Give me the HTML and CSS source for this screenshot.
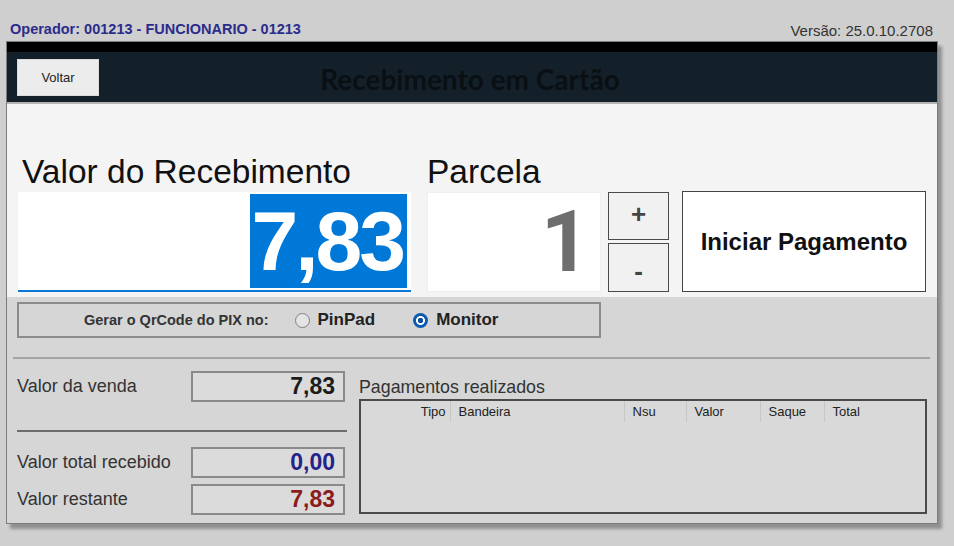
FILE: index.html
```html
<!DOCTYPE html>
<html lang="pt-BR">
  <head>
    <meta charset="UTF-8" />
    <title>Recebimento em Cartão</title>
    <link rel="stylesheet" href="styles.css">
  </head>
  <body>
  <div class="topbar">
    <span class="operador">Operador: 001213 - FUNCIONARIO - 01213</span>
    <span class="versao">Versão: 25.0.10.2708</span>
  </div>

  <div class="panel">
    <div class="header">
      <div><button class="voltar-btn">Voltar</button></div>
      <h1>Recebimento em Cartão</h1>
      <div></div>
    </div>

    <div class="top-section">
      <div class="field valor-field">
        <label>Valor do Recebimento</label>
        <div class="valor-box"><span class="selected">7,83</span></div>
      </div>

      <div class="field parcela-field">
        <label>Parcela</label>
        <div class="parcela-box">1</div>
      </div>

      <div class="stepper">
        <button class="step-btn plus">+</button>
        <button class="step-btn minus">-</button>
      </div>

      <button class="iniciar-btn">Iniciar Pagamento</button>
    </div>

    <div class="bottom-section">
      <div class="pix-box">
        <span class="pix-label">Gerar o QrCode do PIX no:</span>
        <span class="radio"></span>
        <span class="radio-text">PinPad</span>
        <span class="radio checked"></span>
        <span class="radio-text">Monitor</span>
      </div>

      <div class="divider"></div>

      <div class="columns">
        <div class="totals">
          <div class="total-row first">
            <span class="total-label">Valor da venda</span>
            <div class="total-box">7,83</div>
          </div>
          <div class="totals-line"></div>
          <div class="total-row">
            <span class="total-label">Valor total recebido</span>
            <div class="total-box recebido">0,00</div>
          </div>
          <div class="total-row tight">
            <span class="total-label">Valor restante</span>
            <div class="total-box restante">7,83</div>
          </div>
        </div>

        <div class="payments">
          <div class="payments-title">Pagamentos realizados</div>
          <div class="payments-table">
            <table>
              <thead>
                <tr>
                  <th class="col-tipo">Tipo</th>
                  <th class="col-bandeira">Bandeira</th>
                  <th class="col-nsu">Nsu</th>
                  <th class="col-valor">Valor</th>
                  <th class="col-saque">Saque</th>
                  <th class="col-total">Total</th>
                </tr>
              </thead>
              <tbody></tbody>
            </table>
          </div>
        </div>
      </div>
    </div>
  </div>
  </body>
</html>
```

FILE: styles.css
```css
* {
  margin: 0;
  padding: 0;
  box-sizing: border-box;
  font-family: "Liberation Sans", Arial, sans-serif;
}

body {
  background-color: #cfcfcf;
  width: 954px;
  height: 546px;
  overflow: hidden;
}

.topbar {
  height: 41px;
  display: flex;
  justify-content: space-between;
  align-items: flex-end;
  padding: 0 21px 4px 10px;
}

.operador {
  font-size: 14.5px;
  font-weight: bold;
  color: #2b2b8c;
  line-height: 16px;
}

.versao {
  font-size: 15px;
  color: #333;
  line-height: 16px;
  margin-bottom: -2px;
}

.panel {
  margin-left: 6px;
  width: 932px;
  height: 483px;
  border: 1px solid #7c7c7c;
  background: #d6d6d6;
  box-shadow: 4px 5px 3px rgba(0, 0, 0, 0.3);
  display: flex;
  flex-direction: column;
}

.header {
  height: 62px;
  border-top: 10px solid #000;
  border-bottom: 2px solid #b4b4b4;
  background: #13202a;
  display: grid;
  grid-template-columns: 1fr auto 1fr;
  align-items: center;
}

.voltar-btn {
  width: 82px;
  height: 37px;
  margin: 1px 0 0 10px;
  background: #ececec;
  border: 1px solid #dcdcdc;
  font-size: 13px;
  color: #222;
}

h1 {
  font-family: Lato, "Liberation Sans", sans-serif;
  font-size: 28px;
  font-weight: bold;
  color: #0a0f13;
  margin: 4px 4px 0 0;
}

.top-section {
  height: 193px;
  background: #f4f4f4;
  padding: 50px 0 5px 11px;
  display: flex;
  align-items: flex-end;
}

.field label {
  display: block;
  font-size: 33.5px;
  line-height: 36px;
  color: #111;
  padding-left: 4px;
  margin-bottom: 2px;
}

.valor-field {
  width: 393px;
}

.valor-box {
  height: 100px;
  background: white;
  border-bottom: 2px solid #0a78d4;
  display: flex;
  justify-content: flex-end;
  padding: 2px 4px 0 0;
}

.selected {
  display: block;
  height: 94px;
  line-height: 94px;
  background: #0078d7;
  color: white;
  font-size: 84px;
  font-weight: bold;
  letter-spacing: -3px;
  padding: 0 4px 0 2px;
}

.parcela-field {
  width: 174px;
  margin-left: 16px;
}

.parcela-field label {
  padding-left: 0;
}

.parcela-box {
  height: 100px;
  background: white;
  border: 1px solid #efefef;
  text-align: right;
  padding-right: 10px;
  font-family: Roboto, "Liberation Sans", sans-serif;
  font-size: 86px;
  font-weight: bold;
  line-height: 98px;
  color: #6e6e6e;
}

.stepper {
  margin-left: 7px;
  width: 61px;
  display: flex;
  flex-direction: column;
  gap: 3px;
}

.step-btn {
  background: #f1f1f1;
  border: 1px solid #4a4a4a;
  font-size: 26px;
  font-weight: bold;
  color: #444;
}

.step-btn.plus {
  height: 48px;
  line-height: 36px;
  padding-bottom: 4px;
}

.step-btn.minus {
  height: 49px;
  line-height: 40px;
  padding-top: 6px;
}

.iniciar-btn {
  margin-left: 13px;
  width: 244px;
  height: 101px;
  background: white;
  border: 1px solid #444;
  font-size: 24px;
  font-weight: bold;
  color: #111;
}

.bottom-section {
  flex: 1;
  padding-top: 5px;
}

.pix-box {
  margin-left: 10px;
  width: 584px;
  height: 36px;
  border: 2px solid #8c8c8c;
  display: flex;
  align-items: center;
  padding-left: 65px;
}

.pix-label {
  font-size: 14.5px;
  font-weight: bold;
  color: #333;
  margin-right: 26px;
}

.radio {
  width: 15px;
  height: 15px;
  border-radius: 50%;
  border: 1px solid #808080;
  background: #e4e4e4;
  margin-right: 8px;
}

.radio.checked {
  border: none;
  background: radial-gradient(circle, #0b4f9e 0 2.5px, white 3px 4.2px, #0b5cb0 4.7px);
}

.radio-text {
  font-size: 17px;
  font-weight: bold;
  color: #222;
  margin-right: 38px;
}

.divider {
  margin: 19px 0 0 6px;
  width: 917px;
  height: 2px;
  background: #a4a4a4;
}

.columns {
  display: flex;
}

.totals {
  margin-left: 10px;
  width: 330px;
}

.total-row {
  display: flex;
  align-items: center;
  margin-top: 15px;
}

.total-row.first {
  margin-top: 12px;
}

.total-row.tight {
  margin-top: 6px;
}

.total-label {
  width: 174px;
  font-size: 18px;
  color: #333;
}

.total-box {
  width: 154px;
  height: 31px;
  border: 2px solid #8a8a8a;
  background: #dbdbdb;
  text-align: right;
  padding-right: 8px;
  font-size: 23px;
  font-weight: bold;
  line-height: 27px;
  color: #1c1c1c;
}

.total-box.recebido {
  color: #23238a;
}

.total-box.restante {
  color: #8c1c1c;
}

.totals-line {
  margin-top: 28px;
  height: 2px;
  background: #6c6c6c;
}

.payments {
  margin-left: 12px;
  width: 568px;
}

.payments-title {
  margin-top: 18px;
  font-size: 17.8px;
  line-height: 20px;
  color: #333;
  margin-bottom: 2px;
}

.payments-table {
  height: 115px;
  border: 2px solid #4a4a4a;
  background: #d9d9d9;
}

table {
  border-collapse: collapse;
  width: 100%;
}

th {
  font-size: 13px;
  font-weight: normal;
  color: #222;
  height: 21px;
  text-align: left;
  padding-left: 8px;
  border-right: 1px solid #c6c6c6;
}

th.col-tipo {
  width: 89px;
  text-align: right;
  padding: 0 4px 0 0;
}

.col-bandeira {
  width: 174px;
}

.col-nsu {
  width: 62px;
}

.col-valor {
  width: 74px;
}

.col-saque {
  width: 64px;
}

th.col-total {
  border-right: none;
}
```
